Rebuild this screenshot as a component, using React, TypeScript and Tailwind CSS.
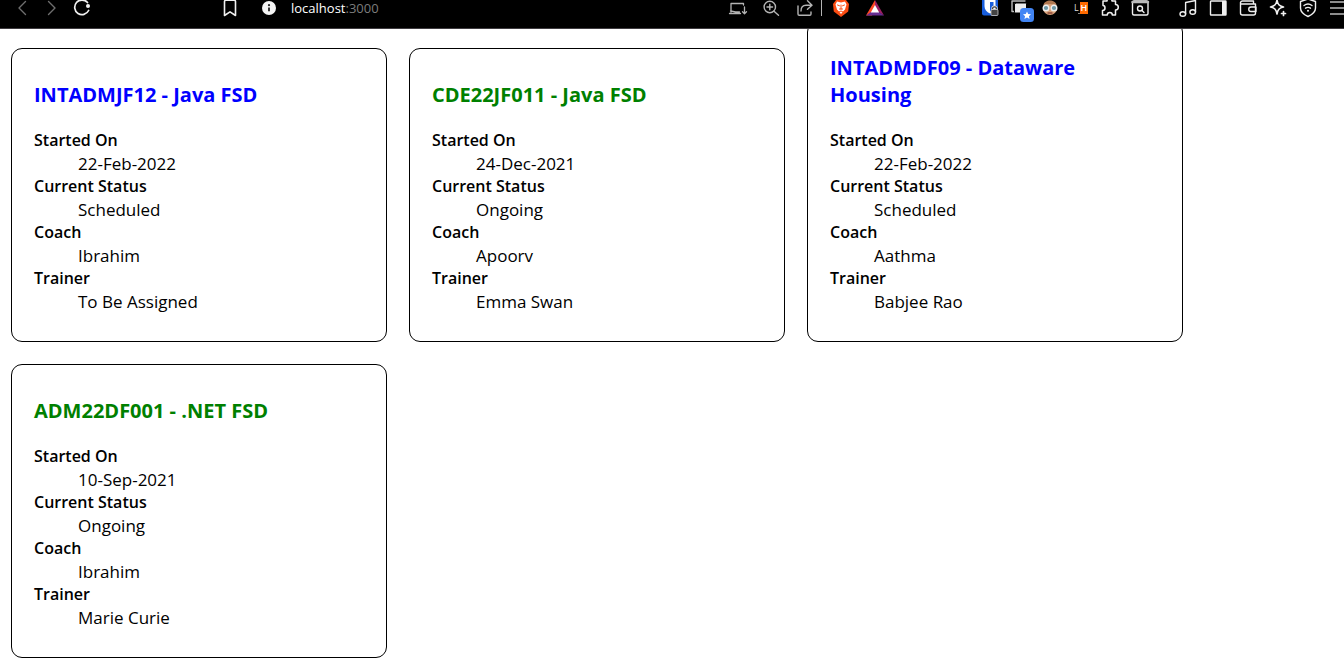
import type { ReactNode } from "react";

type Cohort = {
  code: string;
  startedOn: string;
  status: "Scheduled" | "Ongoing";
  coach: string;
  trainer: string;
};

const cohorts: Cohort[] = [
  { code: "INTADMJF12 - Java FSD", startedOn: "22-Feb-2022", status: "Scheduled", coach: "Ibrahim", trainer: "To Be Assigned" },
  { code: "CDE22JF011 - Java FSD", startedOn: "24-Dec-2021", status: "Ongoing", coach: "Apoorv", trainer: "Emma Swan" },
  { code: "INTADMDF09 - Dataware Housing", startedOn: "22-Feb-2022", status: "Scheduled", coach: "Aathma", trainer: "Babjee Rao" },
  { code: "ADM22DF001 - .NET FSD", startedOn: "10-Sep-2021", status: "Ongoing", coach: "Ibrahim", trainer: "Marie Curie" },
];

function IconButton({ label, className = "w-[30px]", children }: { label: string; className?: string; children: ReactNode }) {
  return (
    <button type="button" aria-label={label} className={`h-7 shrink-0 overflow-hidden ${className}`}>
      <svg width="30" height="28" viewBox="0 0 30 28" fill="none" stroke="currentColor" strokeWidth="1.4" strokeLinecap="round" strokeLinejoin="round" className="mx-auto block max-w-none">
        {children}
      </svg>
    </button>
  );
}

function BrowserBar() {
  return (
    <header className="relative z-10 flex h-[29px] items-start overflow-hidden border-b border-[#3f3c40] bg-black pl-[7px] text-[#f0f0f0]">
      <IconButton label="Back" className="w-[30px] text-[#6f6f6f]">
        <path d="M18.5 1.5 12 8l6.500 6.500" />
      </IconButton>
      <IconButton label="Forward" className="w-[30px] text-[#6f6f6f]">
        <path d="M11.500 1.500 18 8l-6.500 6.500" />
      </IconButton>
      <IconButton label="Reload">
        <path d="M20.500 2.500A7.300 7.300 0 1 0 21.600 10.500" strokeWidth="1.700" />
        <circle cx="21" cy="6" r="2" fill="currentColor" stroke="none" />
      </IconButton>
      <IconButton label="Bookmark this page" className="ml-[118px] w-[30px]">
        <path d="M9.500 1.500c0-.8.500-1.300 1.300-1.300h8.400c.8 0 1.300.500 1.300 1.300v14L15 11.800l-5.500 3.700z" strokeWidth="1.600" />
      </IconButton>
      <IconButton label="Site information" className="ml-[9px] w-[30px]">
        <circle cx="15" cy="8" r="7" fill="#f5f5f5" stroke="none" />
        <path d="M15 7.500v3.700" stroke="#222" strokeWidth="1.800" strokeLinecap="butt" />
        <circle cx="15" cy="5.200" r="1.100" fill="#222" stroke="none" />
      </IconButton>
      <a href="http://localhost:3000" className="ml-[7px] flex-1 text-[13px] leading-[17px] text-white">
        localhost<span className="text-[#7c7c7c]">:3000</span>
      </a>

      <div className="flex text-[#b4b4b4]">
        <IconButton label="Install app" className="w-[34px]">
          <path d="M21.500 5V3.500H9v8.500M7.500 13.500h11M8.500 10.800l5 1.200h4M22.500 7v6.500M20.500 11.700l2 2 2-2" strokeWidth="1.300" />
        </IconButton>
        <IconButton label="Zoom" className="w-[34px]">
          <circle cx="13.800" cy="7" r="5.700" />
          <path d="m18 11.200 4.500 4M11 7h5.600M13.800 4.200v5.600" />
        </IconButton>
        <IconButton label="Share" className="w-[33px]">
          <path d="M8 6v8c0 .8.400 1.200 1.200 1.200h10.600c.8 0 1.200-.4 1.200-1.200v-2M17.500.8 22 5.200l-4.500 4M11 11c0-3.500 2-5.800 5-5.800h5.500" />
        </IconButton>
        <span className="h-4 w-px bg-[#b4b4b4]" />
      </div>
      <IconButton label="Brave Shields" className="w-[38px]">
        <path d="M10 0h10l3 4-.8 7.500L15 17l-7.200-5.500L7 4z" fill="#fb4c12" stroke="none" />
        <path d="M11 1.500 15 2.500l4-1 1.500 3-1.500 5-1.500 1.500L15 14l-2.500-3L11 9.500l-1.500-5z" fill="#fff" stroke="none" />
        <path d="m11.500 5 2 .8M18.500 5l-2 .8M15 5v4M13.500 9h3M13 12l2-1 2 1" stroke="#fb4c12" strokeWidth="1" />
      </IconButton>
      <IconButton label="Brave Rewards">
        <path d="M15 0 6 15.500H12l3-9.500z" fill="#ff4724" stroke="none" />
        <path d="M15 0 24 15.500 18.500 12 15 6z" fill="#9e1f63" stroke="none" />
        <path d="M6 15.500h18l-5-3.500h-8z" fill="#662d91" stroke="none" />
        <path d="m15 5 4.200 7.500h-8.400z" fill="#fff" stroke="none" />
      </IconButton>

      <div className="ml-[85px] flex">
        <IconButton label="Password manager">
          <path d="M7 0h16v13.500a2 2 0 0 1-2 2H9a2 2 0 0 1-2-2z" fill="#175ddc" stroke="none" />
          <path d="M9.500 0h11v6c0 3.500-2 6-5.500 7.500C11.500 12 9.500 9.500 9.500 6z" fill="#fff" stroke="none" />
          <path d="M15 2h3.500v4.500c0 2.200-1.500 4-3.500 5z" fill="#175ddc" stroke="none" />
          <path d="M17.500 10V8.800a2 2 0 0 1 4 0V10" stroke="#ddd" strokeWidth="2.400" />
          <path d="M17.500 10V8.800a2 2 0 0 1 4 0V10" stroke="#444" strokeWidth="1.200" />
          <rect x="16" y="9.500" width="7" height="6" rx="1" fill="#444" stroke="#ccc" strokeWidth=".8" />
        </IconButton>
        <IconButton label="Tab manager" className="w-[30px]">
          <path d="M20 1H7v10.500h2" stroke="#bbb" />
          <rect x="9.500" y="3" width="12" height="10" rx="1" fill="#eee" stroke="#000" strokeWidth="1" />
          <rect x="15" y="8" width="14" height="14" rx="3.500" fill="#4285f4" stroke="none" />
          <path d="m22 11.500 1.200 2.500 2.800.3-2.100 1.900.7 2.800-2.600-1.500-2.600 1.500.7-2.800-2.100-1.900 2.800-.3z" fill="#fff" stroke="none" />
        </IconButton>
        <IconButton label="Reader">
          <circle cx="15" cy="8" r="7" fill="#d9a27a" stroke="none" />
          <path d="M8.500 5c1-6 12-6 13 0-4-1.500-9-1.500-13 0z" fill="#b07850" stroke="none" />
          <circle cx="11" cy="8" r="2.800" fill="#6d98a6" stroke="#eee" />
          <circle cx="19" cy="8" r="2.800" fill="#6d98a6" stroke="#eee" />
          <path d="M13 13h4" stroke="#8f4b3b" />
        </IconButton>
        <IconButton label="Live highlighter">
          <rect x="15" y="2" width="8" height="12" fill="#ff6a00" stroke="none" />
          <text x="9" y="11" fontSize="9" fill="#ddd" stroke="none">L</text>
          <text x="15.500" y="11" fontSize="9" fontWeight="600" fill="#fff" stroke="none">H</text>
          <path d="M13.500 13.500h1" stroke="#999" strokeWidth="1" />
        </IconButton>
        <IconButton label="Extensions">
          <path d="M8 1h4c0-1.500 1-2.500 2.500-2.500S17-.5 17 1h3.500v3.500c1.700 0 2.800 1.200 2.800 2.800s-1.100 2.700-2.800 2.700v5h-3.200c0-1.500-1-2.500-2.500-2.500s-2.500 1-2.500 2.500H7.500v-4.500C9 10.500 10 9.500 10 8S9 5.500 8 5.500z" strokeWidth="1.500" />
        </IconButton>
        <IconButton label="Search tabs">
          <rect x="7.500" y="1" width="15.500" height="14" rx="1.500" />
          <path d="M7.500 2h15.500" strokeWidth="2.500" stroke="#bbb" />
          <circle cx="15" cy="8.500" r="2.500" />
          <path d="m17 10.500 2 2" />
        </IconButton>
      </div>

      <div className="ml-[18px] flex">
        <IconButton label="Media">
          <ellipse cx="9.800" cy="14" rx="2.800" ry="2.200" />
          <ellipse cx="19.700" cy="12" rx="2.800" ry="2.200" />
          <path d="M12.600 14V2.500L22.500.5V12" />
        </IconButton>
        <IconButton label="Sidebar">
          <rect x="7.500" y="1" width="15.500" height="14" rx=".5" />
          <path d="M19 1h4v14h-4z" fill="currentColor" stroke="none" />
        </IconButton>
        <IconButton label="Wallet">
          <path d="M20.500 3.500V1H9.500a2 2 0 0 0-2 1.500v10.500a2 2 0 0 0 2 2h11a2 2 0 0 0 2-2V4H8M23 7h-5a2.200 2.200 0 0 0 0 4.500h5z" />
        </IconButton>
        <IconButton label="Leo AI">
          <path d="M14 0c.8 4.500 2 6 6.500 7-4.500 1-5.700 2.500-6.500 7-.8-4.500-2-6-6.500-7 4.500-1 5.700-2.500 6.500-7z" strokeWidth="1.600" />
          <path d="M20.500 11.500v4M18.500 13.500h4" strokeWidth="1.700" />
        </IconButton>
        <IconButton label="VPN">
          <path d="m15-1 7.500 2.500V8c0 3.800-3 6.500-7.500 8.500C10.500 14.500 7.500 11.800 7.500 8V1.500z" />
          <path d="M11 5.500c2.500-1.800 5.500-1.800 8 0M12.500 8.200c1.500-1 3.500-1 5 0" />
          <circle cx="15" cy="10.800" r="1" fill="currentColor" stroke="none" />
        </IconButton>
        <button type="button" aria-label="Menu" className="h-7 w-[21px] overflow-hidden text-[#bbb]">
          <svg width="21" height="28" viewBox="0 0 21 28" stroke="currentColor" strokeWidth="1.500" className="block">
            <path d="M7 2h16M7 8h16M7 14h16" />
          </svg>
        </button>
      </div>
    </header>
  );
}

function CohortCard({ cohort }: { cohort: Cohort }) {
  const rows = [
    ["Started On", cohort.startedOn],
    ["Current Status", cohort.status],
    ["Coach", cohort.coach],
    ["Trainer", cohort.trainer],
  ];
  return (
    <article className="w-[376px] rounded-[11px] border border-black px-[22px] pt-8 pb-7">
      <h3 className={`mb-[21px] text-[20px] leading-[27px] font-bold ${cohort.status === "Ongoing" ? "text-[#008000]" : "text-[#0000ff]"}`}>
        {cohort.code}
      </h3>
      <dl className="leading-[23px]">
        {rows.map(([term, value]) => (
          <div key={term}>
            <dt className="text-[16px] leading-[23px] font-semibold">{term}</dt>
            <dd className="ml-11 text-[17px] leading-[23px]">{value}</dd>
          </div>
        ))}
      </dl>
    </article>
  );
}

export default function App() {
  return (
    <div className="min-h-screen bg-white font-['Open_Sans','Noto_Sans',sans-serif] text-black">
      <BrowserBar />
      <main className="-mt-2 flex flex-wrap items-end gap-[22px] px-[11px]">
        {cohorts.map((cohort) => (
          <CohortCard key={cohort.code} cohort={cohort} />
        ))}
      </main>
    </div>
  );
}
